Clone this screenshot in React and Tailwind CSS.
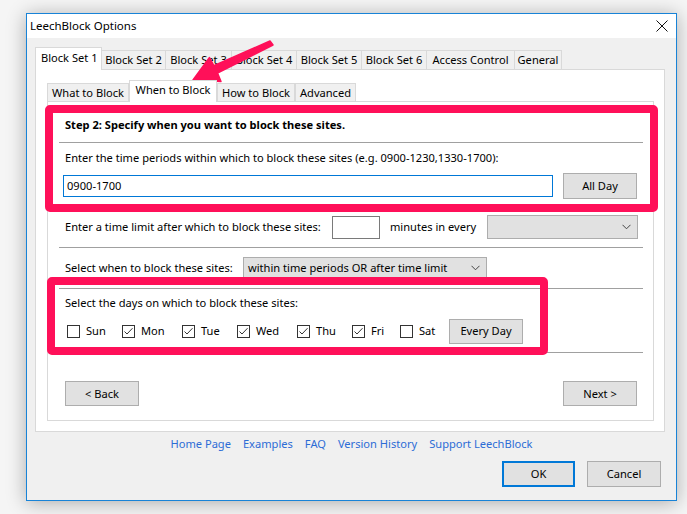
import React from "react";

const outerTabs = [
  { label: "Block Set 1", w: "w-[67px]", active: true },
  { label: "Block Set 2", w: "w-[64px]" },
  { label: "Block Set 3", w: "w-[66px]" },
  { label: "Block Set 4", w: "w-[65px]" },
  { label: "Block Set 5", w: "w-[65px]" },
  { label: "Block Set 6", w: "w-[65px]" },
  { label: "Access Control", w: "w-[88px]" },
  { label: "General", w: "w-[47px]" },
];

const innerTabs = [
  { label: "What to Block", w: "w-[82px]" },
  { label: "When to Block", w: "w-[88px]", active: true },
  { label: "How to Block", w: "w-[78px]" },
  { label: "Advanced", w: "w-[61px]" },
];

const days = [
  { label: "Sun", w: "w-[55px]", on: false },
  { label: "Mon", w: "w-[60px]", on: true },
  { label: "Tue", w: "w-[55px]", on: true },
  { label: "Wed", w: "w-[60px]", on: true },
  { label: "Thu", w: "w-[55px]", on: true },
  { label: "Fri", w: "w-[48px]", on: true },
  { label: "Sat", w: "w-[49px]", on: false },
];

const links = ["Home Page", "Examples", "FAQ", "Version History", "Support LeechBlock"];

function Btn({ children, className = "" }) {
  return (
    <div
      className={`flex items-center justify-center bg-[#e1e1e1] border border-[#adadad] ${className}`}
    >
      {children}
    </div>
  );
}

function Chevron() {
  return (
    <svg width="9" height="6" viewBox="0 0 9 6" className="shrink-0">
      <polyline points="0.5,0.8 4.5,4.8 8.5,0.8" fill="none" stroke="#444" strokeWidth="1" />
    </svg>
  );
}

function Check({ on }) {
  return (
    <svg width="13" height="13" viewBox="0 0 13 13" className="shrink-0">
      <rect x="0.5" y="0.5" width="12" height="12" fill="#fff" stroke="#333" />
      {on && (
        <polyline points="2.5,6.5 5,9 10.5,3.2" fill="none" stroke="#333" strokeWidth="1" />
      )}
    </svg>
  );
}

function Sep() {
  return <div className="ml-[11px] w-[584px] h-px bg-[#a0a0a0]" />;
}

export default function App() {
  return (
    <div className="relative w-[687px] h-[514px] overflow-hidden whitespace-nowrap bg-[#f5f5f5] text-[11.1px] text-black font-['Noto_Sans','Open_Sans',sans-serif] leading-none">
      <div className="pl-[26px] pt-[13px]">
        <div className="w-[651px] h-[488px] border border-[#1883d7] bg-[#f0f0f0] shadow-[0_2px_18px_rgba(0,0,0,0.3)] flex flex-col">
          {/* title bar */}
          <div className="h-[24px] bg-white flex items-center justify-between pl-[3px] pr-[8px]">
            <span className="text-[11.5px]">LeechBlock Options</span>
            <svg width="12" height="12" viewBox="0 0 12 12">
              <line x1="0.5" y1="0.5" x2="11.5" y2="11.5" stroke="#111" strokeWidth="1" />
              <line x1="11.5" y1="0.5" x2="0.5" y2="11.5" stroke="#111" strokeWidth="1" />
            </svg>
          </div>

          <div className="flex-1 flex flex-col pl-[8px] pt-[9px]">
            {/* outer tabs */}
            <div className="flex items-end h-[22px]">
              {outerTabs.map((t) =>
                t.active ? (
                  <div
                    key={t.label}
                    className={`${t.w} h-[23px] -mb-px relative z-10 bg-white border border-b-0 border-[#d9d9d9] flex items-center pl-[5px] pb-[3px]`}
                  >
                    {t.label}
                  </div>
                ) : (
                  <div
                    key={t.label}
                    className={`${t.w} h-[19px] bg-[#f0f0f0] border border-l-0 border-b-0 border-[#d9d9d9] flex items-center justify-center`}
                  >
                    {t.label}
                  </div>
                )
              )}
            </div>

            {/* outer panel */}
            <div className="w-[630px] h-[363px] bg-white border border-[#d9d9d9] pl-[11px] pt-[10px]">
              <div className="flex items-end h-[21px]">
                {innerTabs.map((t) =>
                  t.active ? (
                    <div
                      key={t.label}
                      className={`${t.w} h-[22px] -mb-px relative z-10 bg-white border border-b-0 border-[#d9d9d9] flex items-center justify-center pb-[3px]`}
                    >
                      {t.label}
                    </div>
                  ) : (
                    <div
                      key={t.label}
                      className={`${t.w} h-[18px] bg-[#f0f0f0] border border-b-0 border-[#d9d9d9] flex items-center justify-center`}
                    >
                      {t.label}
                    </div>
                  )
                )}
              </div>

              {/* inner panel */}
              <div className="w-[607px] h-[320px] bg-white border border-[#d9d9d9] flex flex-col">
                <div className="h-[40px] pt-[5px] pl-[17px] flex items-center font-bold">
                  Step 2: Specify when you want to block these sites.
                </div>
                <Sep />
                <div className="h-[30px] pl-[17px] flex items-center">
                  Enter the time periods within which to block these sites (e.g. 0900-1230,1330-1700):
                </div>
                <div className="h-[26px] pl-[15px] flex items-center gap-[10px]">
                  <div className="w-[490px] h-[22px] border border-[#0078d7] flex items-center pl-[3px]">
                    0900-1700
                  </div>
                  <Btn className="w-[74px] h-[26px]">All Day</Btn>
                </div>

                <div className="h-[48px] pt-[8px] pl-[17px] flex items-center">
                  <span className="w-[267px]">Enter a time limit after which to block these sites:</span>
                  <div className="w-[48px] h-[23px] border border-[#7a7a7a] bg-white" />
                  <span className="ml-[10px] w-[97px]">minutes in every</span>
                  <div className="w-[151px] h-[24px] bg-[#e1e1e1] border border-[#adadad] flex items-center justify-end pr-[6px]">
                    <Chevron />
                  </div>
                </div>
                <Sep />

                <div className="h-[40px] pl-[17px] flex items-center">
                  <span className="w-[178px]">Select when to block these sites:</span>
                  <div className="w-[244px] h-[22px] bg-[#e1e1e1] border border-[#adadad] flex items-center justify-between pl-[4px] pr-[6px]">
                    <span>within time periods OR after time limit</span>
                    <Chevron />
                  </div>
                </div>
                <Sep />

                <div className="h-[28px] pl-[17px] flex items-center">
                  Select the days on which to block these sites:
                </div>
                <div className="h-[28px] pl-[19px] flex items-center">
                  {days.map((d) => (
                    <div key={d.label} className={`${d.w} flex items-center gap-[6px]`}>
                      <Check on={d.on} />
                      <span>{d.label}</span>
                    </div>
                  ))}
                  <Btn className="w-[74px] h-[25px]">Every Day</Btn>
                </div>
                <div className="h-[7px]" />
                <Sep />

                <div className="mt-[28px] pl-[17px] pr-[16px] flex items-center justify-between">
                  <Btn className="w-[74px] h-[25px]">&lt; Back</Btn>
                  <Btn className="w-[74px] h-[25px]">Next &gt;</Btn>
                </div>
              </div>
            </div>

            {/* links */}
            <div className="h-[23px] pr-[8px] flex items-center justify-center gap-[12px] text-[#2c6cd6]">
              {links.map((l) => (
                <span key={l}>{l}</span>
              ))}
            </div>

            {/* ok / cancel */}
            <div className="mt-[6px] pr-[15px] flex justify-end gap-[12px]">
              <div className="w-[73px] h-[26px] flex items-center justify-center bg-[#e1e1e1] border-2 border-[#0078d7]">
                OK
              </div>
              <Btn className="w-[74px] h-[26px]">Cancel</Btn>
            </div>
          </div>
        </div>
      </div>

      {/* annotation overlays */}
      <div className="absolute left-[45px] top-[105px] w-[613px] h-[107px] border-[8px] border-[#ff1059] rounded-[5px] pointer-events-none" />
      <div className="absolute left-[47px] top-[277px] w-[501px] h-[78px] border-[8px] border-[#ff1059] rounded-[5px] pointer-events-none" />
      <svg className="absolute left-0 top-0 pointer-events-none" width="687" height="514" viewBox="0 0 687 514">
        <polygon
          points="273,45 217.5,73 221,81.5 193,80 209.5,57.5 213.8,65.6 270,41"
          fill="#ff1059"
          stroke="#ff1059"
          strokeWidth="1.5"
          strokeLinejoin="round"
        />
      </svg>
    </div>
  );
}
